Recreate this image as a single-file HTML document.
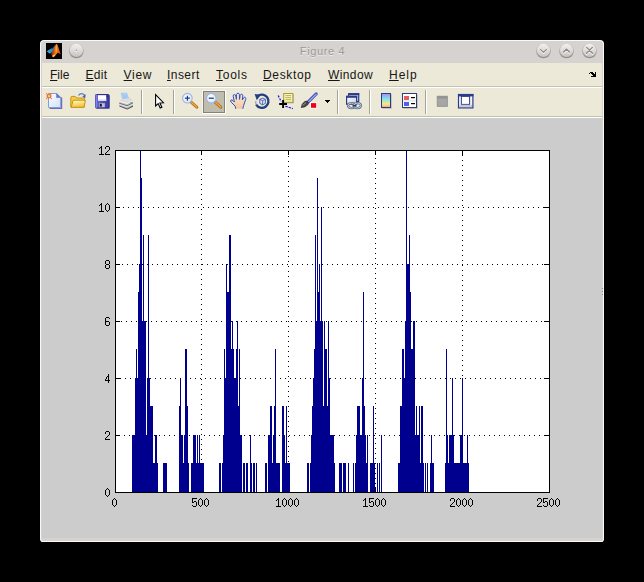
<!DOCTYPE html>
<html><head><meta charset="utf-8">
<style>
html,body{margin:0;padding:0;background:#000;}
body{width:644px;height:582px;position:relative;overflow:hidden;font-family:"Liberation Sans",sans-serif;}
#win{position:absolute;left:40px;top:40px;width:564px;height:502px;background:#d6d2d0;border-radius:4px 4px 3px 3px;overflow:hidden;}
#win:before{content:"";position:absolute;left:0;top:0;right:0;bottom:0;border:1px solid #f9f8f7;border-radius:4px 4px 3px 3px;pointer-events:none;z-index:5;}
#title{position:absolute;left:0;top:0;width:564px;height:23px;}
#title .t{position:absolute;left:0.5px;width:564px;top:5px;text-align:center;font-size:11px;color:#9e9696;text-shadow:0 1px 0 #efedeb;letter-spacing:0.62px;}
#menu{position:absolute;left:2px;top:23px;width:560px;height:23px;background:#ece9d8;}
#menu span{position:absolute;top:5px;font-size:12px;color:#161616;white-space:nowrap;}
#menu span u{text-decoration:underline;}
#sep1{position:absolute;left:2px;top:46px;width:560px;height:1px;background:#c6c3b1;}
#sep2{position:absolute;left:2px;top:47px;width:560px;height:1px;background:#fff;}
#tool{position:absolute;left:2px;top:48px;width:560px;height:28px;background:#ece9d8;}
#sep3{position:absolute;left:2px;top:76px;width:560px;height:1px;background:#c3c1ae;}
#sep4{position:absolute;left:2px;top:77px;width:560px;height:1px;background:#ffffff;}
#fig{position:absolute;left:2px;top:78px;width:560px;height:420px;background:#cccccc;}
#bot{position:absolute;left:1px;top:501px;width:562px;height:1px;background:#eceae8;}
</style></head><body>
<div id="win">
 <div id="title"><div class="t">Figure 4</div></div>
 <div id="menu">
  <span style="left:8px"><u>F</u>ile</span>
  <span style="left:43.5px;letter-spacing:0.3px"><u>E</u>dit</span>
  <span style="left:81.6px;letter-spacing:0.7px"><u>V</u>iew</span>
  <span style="left:125px;letter-spacing:0.45px"><u>I</u>nsert</span>
  <span style="left:174px;letter-spacing:0.75px"><u>T</u>ools</span>
  <span style="left:221px;letter-spacing:0.65px"><u>D</u>esktop</span>
  <span style="left:286px;letter-spacing:0.4px"><u>W</u>indow</span>
  <span style="left:347px;letter-spacing:1px"><u>H</u>elp</span>
 </div>
 <div id="sep1"></div><div id="sep2"></div>
 <div id="tool"></div>
 <div id="sep3"></div><div id="sep4"></div>
 <div id="fig"></div><div id="bot"></div>
</div>
<svg width="644" height="582" style="position:absolute;left:0;top:0">
<defs>
 <linearGradient id="gpage" x1="0" y1="0" x2="1" y2="1"><stop offset="0" stop-color="#ffffff"/><stop offset="1" stop-color="#cfe0fa"/></linearGradient>
 <linearGradient id="gfold" x1="0" y1="0" x2="0.3" y2="1"><stop offset="0" stop-color="#fffbdc"/><stop offset="0.6" stop-color="#f8dc70"/><stop offset="1" stop-color="#eec040"/></linearGradient>
 <linearGradient id="gsave" x1="0" y1="0" x2="1" y2="0"><stop offset="0" stop-color="#6a6ae0"/><stop offset="1" stop-color="#3a3a9c"/></linearGradient>
 <linearGradient id="gcbar" x1="0" y1="0" x2="0" y2="1"><stop offset="0" stop-color="#a48cf4"/><stop offset="0.4" stop-color="#84e4ec"/><stop offset="0.75" stop-color="#f8ec84"/><stop offset="1" stop-color="#f8a090"/></linearGradient>
 <radialGradient id="glens" cx="0.4" cy="0.4" r="0.7"><stop offset="0" stop-color="#ffffff"/><stop offset="1" stop-color="#c4ecf4"/></radialGradient>
 <linearGradient id="gwin" x1="0" y1="0" x2="1" y2="1"><stop offset="0" stop-color="#ffffff"/><stop offset="1" stop-color="#c8ccd8"/></linearGradient>
 <linearGradient id="ghand" x1="0" y1="0" x2="0" y2="1"><stop offset="0" stop-color="#fde8d4"/><stop offset="1" stop-color="#f4c8a0"/></linearGradient>
 <linearGradient id="gbtn" x1="0" y1="0" x2="0" y2="1"><stop offset="0" stop-color="#f0efee"/><stop offset="1" stop-color="#c9c5c2"/></linearGradient>
</defs>
<!-- separators -->
<g shape-rendering="crispEdges">
 <g fill="#a5a397"><rect x="141" y="90" width="1" height="24"/><rect x="173" y="90" width="1" height="24"/><rect x="337" y="90" width="1" height="24"/><rect x="369" y="90" width="1" height="24"/><rect x="425" y="90" width="1" height="24"/></g>
 <g fill="#ffffff"><rect x="142" y="90" width="1" height="24"/><rect x="174" y="90" width="1" height="24"/><rect x="338" y="90" width="1" height="24"/><rect x="370" y="90" width="1" height="24"/><rect x="426" y="90" width="1" height="24"/></g>
 <!-- pressed button -->
 <rect x="202" y="90" width="24" height="24" fill="#ffffff"/><rect x="202" y="90" width="23" height="1" fill="#f6f5ee"/><rect x="202" y="90" width="1" height="23" fill="#f6f5ee"/>
 <rect x="203" y="91" width="22" height="22" fill="#848279"/>
 <rect x="204" y="92" width="20" height="20" fill="#bfbdae"/>
</g>
<!-- NEW -->
<g>
 <path d="M61.6 97.6 V108.5 H49.6" fill="none" stroke="#6c6cac" stroke-width="1.2"/>
 <path d="M48.5 93.5 H56.6 L60.6 97.5 V107.5 H48.5 Z" fill="url(#gpage)" stroke="#7e9ee4" stroke-width="1"/>
 <path d="M56.6 93.5 L60.6 97.5 H56.6 Z" fill="#7078c0" stroke="#5c68b0" stroke-width="0.6"/>
 <g fill="#e8683c"><circle cx="46.6" cy="93.6" r="0.65"/><circle cx="51.4" cy="93.6" r="0.65"/><circle cx="46.6" cy="98.6" r="0.65"/><circle cx="51.4" cy="98.6" r="0.65"/></g>
 <circle cx="49" cy="96.1" r="2.5" fill="#ea7046"/><circle cx="49" cy="96.1" r="1.2" fill="#e8dc58"/>
</g>
<!-- OPEN -->
<g>
 <path d="M78.5 95.5 C80 92.8 84 92.8 85 96.3" fill="none" stroke="#5a82c0" stroke-width="1.3"/>
 <path d="M85.6 94.2 L85.2 98.4 L82.4 96.6 Z" fill="#3e68b0"/>
 <path d="M70.8 107 V97.6 Q70.8 96.4 72 96.4 H75.4 L76.8 98 H83.4 Q84.4 98 84.4 99 V107 Z" fill="#f2cc58" stroke="#c8960c" stroke-width="1"/>
 <path d="M71.2 107.4 L73.2 100.2 H85.4 L84 107.4 Z" fill="url(#gfold)" stroke="#c8960c" stroke-width="1" stroke-linejoin="round"/>
</g>
<!-- SAVE -->
<g>
 <rect x="96.3" y="95.3" width="13.5" height="13.5" fill="#26267a" opacity="0.55"/>
 <rect x="95.5" y="94.5" width="13.5" height="13.5" rx="0.8" fill="url(#gsave)" stroke="#30308c" stroke-width="1"/>
 <rect x="95.5" y="94.5" width="1.2" height="13.5" fill="#9090ec"/>
 <rect x="98" y="95.2" width="8.2" height="5.8" fill="#ffffff"/>
 <rect x="98" y="99.4" width="8.2" height="1.6" fill="#d8dcf0"/>
 <rect x="99.2" y="103.2" width="5.6" height="4" fill="#c0c0c8"/>
 <rect x="99.8" y="103.8" width="2" height="2.8" fill="#181830"/>
 <rect x="106.6" y="95.6" width="1.2" height="1.2" fill="#20206c"/>
</g>
<!-- PRINT -->
<g>
 <path d="M121.2 93.2 L126.8 93.2 L128.6 98.6 L122.8 99.8 Z" fill="#b4d8fc" stroke="#90b8e8" stroke-width="0.6"/>
 <path d="M122.2 94.6 L126.4 94.4 L127.6 98 L123.2 98.8Z" fill="#9cc8f4"/>
 <path d="M119.4 101.4 L122.6 99 L129.4 98.2 L133 100.8 L133 105.6 L127.2 108.6 L119.4 105.6 Z" fill="#bdbdbd"/>
 <path d="M119.4 101.4 L122.6 99 L129.4 98.2 L133 100.8 L127.2 103.6 Z" fill="#dcdcdc"/>
 <path d="M119.4 101.4 L127.2 103.6 L133 100.8" fill="none" stroke="#fafafa" stroke-width="0.9"/>
 <path d="M119.4 103.4 L127.2 105.8 L133 103" fill="none" stroke="#6c6c6c" stroke-width="1"/>
 <path d="M119.6 104.4 L127.2 106.8 L133 104" fill="none" stroke="#f0f0f0" stroke-width="0.8"/>
 <path d="M119.4 105.6 L127.2 108.6 L133 105.6 L133 106.8 L127.2 109.6 L119.4 106.6Z" fill="#484848"/>
 <rect x="130.4" y="102" width="1.2" height="1" fill="#38b838"/>
</g>
<!-- ARROW -->
<path d="M155.6 94.6 V106 L158.2 103.6 L160.2 108 L161.9 107.2 L159.9 102.9 L163.4 102.7 Z" fill="#ffffff" stroke="#000000" stroke-width="1.1" stroke-linejoin="miter"/>
<!-- ZOOM IN -->
<g>
 <path d="M191.4 102.4 L196.8 107.2" stroke="#a86c28" stroke-width="3" stroke-linecap="round"/>
 <path d="M191.6 102.4 L196.6 106.9" stroke="#f0a030" stroke-width="1.7" stroke-linecap="round"/>
 <circle cx="187.4" cy="98.2" r="4.8" fill="url(#glens)" stroke="#a8aee6" stroke-width="1.1"/>
 <path d="M184.9 98.2h5M187.4 95.7v5" stroke="#283c84" stroke-width="1.2"/>
</g>
<!-- ZOOM OUT -->
<g>
 <path d="M215.4 102.4 L220.8 107.2" stroke="#a86c28" stroke-width="3" stroke-linecap="round"/>
 <path d="M215.6 102.4 L220.6 106.9" stroke="#f0a030" stroke-width="1.7" stroke-linecap="round"/>
 <circle cx="211.3" cy="98.2" r="4.8" fill="url(#glens)" stroke="#a8aee6" stroke-width="1.1"/>
 <path d="M208.8 98.2h5" stroke="#283c84" stroke-width="1.3"/>
</g>
<!-- HAND -->
<g>
 <path d="M235.7 108.8 L235.2 106.2 L231.2 102.2 Q230 100.6 231 100 Q232 99.6 233.2 100.8 L234.4 102 L233.2 96.2 Q233 94.6 234.3 94.5 Q235.6 94.5 235.8 96 L236.4 99.4 L236.5 94.6 Q236.7 93.2 238 93.2 Q239.3 93.2 239.4 94.6 L239.5 99.4 L240.2 95.4 Q240.6 94 241.8 94.2 Q243 94.5 242.8 96 L242.3 100 L243.6 97.8 Q244.4 96.8 245.3 97.4 Q246.1 98.1 245.7 99.4 L243.6 105.6 L242.8 108.8 Z" fill="url(#ghand)"/>
 <path d="M235.7 108.8 L235.2 106.2 L231.2 102.2 Q230 100.6 231 100 Q232 99.6 233.2 100.8 L234.4 102 L233.2 96.2 Q233 94.6 234.3 94.5 Q235.6 94.5 235.8 96 L236.4 99.4 L236.5 94.6 Q236.7 93.2 238 93.2 Q239.3 93.2 239.4 94.6 L239.5 99.4 L240.2 95.4 Q240.6 94 241.8 94.2 Q243 94.5 242.8 96 L242.3 100 L243.6 97.8 Q244.4 96.8 245.3 97.4 Q246.1 98.1 245.7 99.4 L243.6 105.6 L242.8 108.8" fill="none" stroke="#2c54c8" stroke-width="1" stroke-linejoin="round"/>
</g>
<!-- ROTATE -->
<g>
 <path d="M257.6 96.2 A6.6 6.6 0 1 1 256.2 104.6" fill="none" stroke="#243c84" stroke-width="2.3"/>
 <path d="M256.2 104.6 A6.6 6.6 0 0 1 255.8 101" fill="none" stroke="#2c4890" stroke-width="1.6" opacity="0.35"/>
 <path d="M254.6 94 L260.8 94.8 L256.8 100.2 Z" fill="#243c84"/>
 <path d="M259.8 99.4 L262.6 98.2 L265.4 99.4 V103.4 L262.6 104.8 L259.8 103.4Z" fill="#dce6fa" stroke="#3c58a8" stroke-width="0.9"/>
 <path d="M259.8 99.4 L262.6 100.6 L265.4 99.4 M262.6 100.6 V104.8" fill="none" stroke="#3c58a8" stroke-width="0.8"/>
</g>
<!-- DATA CURSOR -->
<g>
 <rect x="284.4" y="94.2" width="9.4" height="9.2" fill="#8c8c8c" opacity="0.5"/>
 <rect x="283.7" y="93.5" width="9.2" height="8.8" fill="#f8f6b4" stroke="#a89a34" stroke-width="1"/>
 <path d="M285.4 95.6h5.8M285.4 97.6h5.8M285.4 99.6h5.8" stroke="#b0a860" stroke-width="0.9"/>
 <path d="M278.2 95.6 L281.2 101.6" stroke="#1010ff" stroke-width="1.2" stroke-dasharray="2 1.2"/>
 <path d="M285.4 106.2 L292.8 108.6" stroke="#1010ff" stroke-width="1.2" stroke-dasharray="2.4 1"/>
 <path d="M279.2 104h7.8M283.1 100.1v7.8" stroke="#000" stroke-width="1.9"/>
</g>
<!-- BRUSH -->
<g>
 <path d="M308.2 101.8 L316.2 93.9" stroke="#4858c0" stroke-width="3.2" stroke-linecap="round"/>
 <path d="M308.8 101.6 L316 94.4" stroke="#e8ecff" stroke-width="0.9" stroke-linecap="round"/>
 <path d="M301.2 107.6 Q301.4 104 304.6 101.6 Q306.4 100.4 307.8 101.8 Q309.2 103.4 307.8 104.8 Q305.4 107.4 301.2 107.6 Z" fill="#484848" stroke="#202020" stroke-width="0.6"/>
 <path d="M303 105.6 Q304 103.6 306 102.6" stroke="#a0a0a0" stroke-width="0.9" fill="none"/>
 <rect x="310.2" y="102.2" width="6.8" height="6.4" fill="#ffffff"/>
 <rect x="311" y="103.1" width="5.2" height="4.7" fill="#f40014"/>
</g>
<path d="M325 100h5v1h-1v1h-1v1h-1v-1h-1v-1h-1z" fill="#000" shape-rendering="crispEdges"/>
<!-- LINK -->
<g>
 <rect x="348.7" y="93.7" width="10" height="7.8" fill="url(#gwin)" stroke="#2c3c8c" stroke-width="1.2"/>
 <rect x="348.2" y="93.2" width="11" height="2" fill="#2c3c8c"/>
 <rect x="346.6" y="96.4" width="10" height="7.8" fill="url(#gwin)" stroke="#2c3c8c" stroke-width="1.2"/>
 <rect x="346" y="95.8" width="11.2" height="2" fill="#2c3c8c"/>
 <ellipse cx="351.6" cy="105.6" rx="3.6" ry="2.5" fill="none" stroke="#5c6c8c" stroke-width="2.2"/>
 <ellipse cx="351.6" cy="105.6" rx="3.6" ry="2.5" fill="none" stroke="#b8c8e0" stroke-width="1"/>
 <ellipse cx="357.4" cy="105.6" rx="3.6" ry="2.5" fill="none" stroke="#5c6c8c" stroke-width="2.2"/>
 <ellipse cx="357.4" cy="105.6" rx="3.6" ry="2.5" fill="none" stroke="#b8c8e0" stroke-width="1"/>
 <path d="M352.6 105.8h3.8" stroke="#283048" stroke-width="1.3"/>
</g>
<!-- COLORBAR -->
<g>
 <rect x="382.3" y="94.3" width="9.4" height="14.4" fill="#8c8c84" opacity="0.55"/>
 <rect x="381.5" y="93.5" width="9" height="14" fill="url(#gcbar)" stroke="#2c3c80" stroke-width="1"/>
</g>
<!-- LEGEND -->
<g>
 <rect x="403.3" y="94.3" width="14.4" height="14.4" fill="#8c8c84" opacity="0.55"/>
 <rect x="402.5" y="93.5" width="14" height="14" fill="#ffffff" stroke="#2c3c80" stroke-width="1"/>
 <rect x="403" y="100" width="13" height="1.6" fill="#e4e8f4"/>
 <rect x="404" y="96" width="5" height="4" fill="#e85c5c"/>
 <rect x="404" y="102" width="5" height="4" fill="#5c5ce4"/>
 <rect x="411" y="97" width="4" height="1.2" fill="#000"/>
 <rect x="411" y="103" width="4" height="1.2" fill="#000"/>
</g>
<!-- GRAY SQUARE -->
<g>
 <rect x="437.6" y="96.6" width="10.4" height="10.4" fill="#8a8a84" opacity="0.45"/>
 <rect x="437.2" y="96.2" width="10" height="10" fill="#a6a6a6" stroke="#909090" stroke-width="0.8"/>
 <rect x="437.2" y="96.2" width="10" height="2.2" fill="#929292"/>
</g>
<!-- DOCK -->
<g>
 <rect x="458.5" y="94.5" width="14.4" height="13.4" fill="#f4f4f8" stroke="#2c3c8c" stroke-width="1.2"/>
 <rect x="458" y="94" width="15.4" height="2.4" fill="#2c3c8c"/>
 <rect x="461.4" y="96.4" width="8.2" height="8" fill="#ffffff" stroke="#2c3c8c" stroke-width="1"/>
 <rect x="459.4" y="104.8" width="12.6" height="2" fill="#c4c4c8"/>
 <path d="M460.6 97v7M470.6 97v7" stroke="#d8d8e0" stroke-width="1" stroke-dasharray="1 1"/>
</g>
</svg>

<svg width="644" height="582" style="position:absolute;left:0;top:0">
<defs>
 <linearGradient id="gb1" x1="0" y1="0" x2="0" y2="1"><stop offset="0" stop-color="#f2f1f0"/><stop offset="0.55" stop-color="#dcd9d7"/><stop offset="1" stop-color="#c6c2bf"/></linearGradient>
 <linearGradient id="gb2" x1="0" y1="0" x2="0" y2="1"><stop offset="0" stop-color="#c2beba"/><stop offset="1" stop-color="#8e8a86"/></linearGradient>
 <linearGradient id="gml" x1="0" y1="0" x2="1" y2="0"><stop offset="0" stop-color="#8c2410"/><stop offset="0.3" stop-color="#dc4c1c"/><stop offset="0.52" stop-color="#f49020"/><stop offset="0.7" stop-color="#e86820"/><stop offset="1" stop-color="#b03414"/></linearGradient>
 <linearGradient id="gmb" x1="0" y1="0" x2="1" y2="0"><stop offset="0" stop-color="#38b4e0"/><stop offset="1" stop-color="#2c6c98"/></linearGradient>
</defs>
<!-- matlab icon -->
<rect x="46" y="43" width="16" height="16" fill="#000" shape-rendering="crispEdges"/>
<g transform="translate(46,43)">
 <path d="M0.7 8.3 L5.2 5.4 L7 5.6 L9.3 1.8 L9.6 3.4 L7 8.4 L5.4 9.7 L3.7 10.7 Z" fill="url(#gmb)"/>
 <path d="M5.2 5.4 L7 5.6 L9.3 1.8 L8.4 2.8 L6.8 4.8Z" fill="#2a7ca0"/>
 <path d="M10.5 1.1 Q9.6 1.6 9.3 2.5 L8 5.9 L6.3 8.7 L5.05 10.9 L6.1 13.1 Q6.6 14.2 7.3 14.2 L9.3 12.4 L11.4 10 Q11.9 9.7 12.4 9.9 L14.8 11.6 L13.1 6.3 L11.75 2.5 Q11.2 1 10.5 1.1 Z" fill="url(#gml)"/>
 <path d="M6.1 13.1 Q6.6 14.2 7.3 14.2 L9.3 12.4 L8.4 11.2 Q7 12 6.1 13.1Z" fill="#fcd428"/>
 <path d="M10.5 1.2 L10.9 6.5 L10.2 9.4 L9.6 6 Z" fill="#fcc428" opacity="0.8"/>
</g>
<!-- title buttons -->
<defs>
 <g id="tb">
  <circle cx="0" cy="0.6" r="7.3" fill="url(#gb2)"/>
  <circle cx="0" cy="0" r="6.6" fill="url(#gb1)"/>
 </g>
</defs>
<use href="#tb" x="76.4" y="50.4"/>
<use href="#tb" x="543.5" y="50.4"/>
<use href="#tb" x="566.5" y="50.4"/>
<use href="#tb" x="589.5" y="50.4"/>
<circle cx="76.4" cy="51.2" r="0.7" fill="#ffffff"/><circle cx="76.4" cy="50.2" r="0.6" fill="#8c8884"/>
<g fill="none" stroke-linecap="round" stroke-linejoin="round">
 <path d="M540.6 50.6 L543.5 53.4 L546.4 50.6" stroke="#f8f8f8" stroke-width="1.3"/>
 <path d="M540.6 49.6 L543.5 52.4 L546.4 49.6" stroke="#8c8886" stroke-width="1.3"/>
 <path d="M563.6 53 L566.5 50.2 L569.4 53" stroke="#f8f8f8" stroke-width="1.3"/>
 <path d="M563.6 52 L566.5 49.2 L569.4 52" stroke="#8c8886" stroke-width="1.3"/>
 <path d="M586.6 48.4 L592.4 54.2 M592.4 48.4 L586.6 54.2" stroke="#f8f8f8" stroke-width="1.3"/>
 <path d="M586.6 47.4 L592.4 53.2 M592.4 47.4 L586.6 53.2" stroke="#8c8886" stroke-width="1.3"/>
</g>
<g fill="#8a8482" shape-rendering="crispEdges"><rect x="602" y="288" width="1" height="1"/><rect x="602" y="291" width="1" height="1"/><rect x="602" y="294" width="1" height="1"/></g>
<!-- dock arrow -->
<path shape-rendering="crispEdges" fill="#000" d="M590 72h3v1h-3zM595 72h1v5h-1zM589 73h1v1h-1zM591 73h3v1h-3zM592 74h3v1h-3zM593 75h2v1h-2zM591 76h4v1h-4z"/>
</svg>

<svg width="644" height="582" style="position:absolute;left:0;top:0" shape-rendering="crispEdges">
 <rect x="115" y="150" width="435" height="343" fill="#fff"/>
 <g fill="#000"><path d="M119 435h1v1h-1zM124 435h1v1h-1zM129 435h1v1h-1zM134 435h1v1h-1zM139 435h1v1h-1zM144 435h1v1h-1zM149 435h1v1h-1zM154 435h1v1h-1zM159 435h1v1h-1zM164 435h1v1h-1zM169 435h1v1h-1zM174 435h1v1h-1zM179 435h1v1h-1zM184 435h1v1h-1zM189 435h1v1h-1zM194 435h1v1h-1zM199 435h1v1h-1zM204 435h1v1h-1zM209 435h1v1h-1zM214 435h1v1h-1zM219 435h1v1h-1zM224 435h1v1h-1zM229 435h1v1h-1zM234 435h1v1h-1zM239 435h1v1h-1zM244 435h1v1h-1zM249 435h1v1h-1zM254 435h1v1h-1zM259 435h1v1h-1zM264 435h1v1h-1zM269 435h1v1h-1zM274 435h1v1h-1zM279 435h1v1h-1zM284 435h1v1h-1zM289 435h1v1h-1zM294 435h1v1h-1zM299 435h1v1h-1zM304 435h1v1h-1zM309 435h1v1h-1zM314 435h1v1h-1zM319 435h1v1h-1zM324 435h1v1h-1zM329 435h1v1h-1zM334 435h1v1h-1zM339 435h1v1h-1zM344 435h1v1h-1zM349 435h1v1h-1zM354 435h1v1h-1zM359 435h1v1h-1zM364 435h1v1h-1zM369 435h1v1h-1zM374 435h1v1h-1zM379 435h1v1h-1zM384 435h1v1h-1zM389 435h1v1h-1zM394 435h1v1h-1zM399 435h1v1h-1zM404 435h1v1h-1zM409 435h1v1h-1zM414 435h1v1h-1zM419 435h1v1h-1zM424 435h1v1h-1zM429 435h1v1h-1zM434 435h1v1h-1zM439 435h1v1h-1zM444 435h1v1h-1zM449 435h1v1h-1zM454 435h1v1h-1zM459 435h1v1h-1zM464 435h1v1h-1zM469 435h1v1h-1zM474 435h1v1h-1zM479 435h1v1h-1zM484 435h1v1h-1zM489 435h1v1h-1zM494 435h1v1h-1zM499 435h1v1h-1zM504 435h1v1h-1zM509 435h1v1h-1zM514 435h1v1h-1zM519 435h1v1h-1zM524 435h1v1h-1zM529 435h1v1h-1zM534 435h1v1h-1zM539 435h1v1h-1zM544 435h1v1h-1z"/><path d="M120 378h1v1h-1zM125 378h1v1h-1zM130 378h1v1h-1zM135 378h1v1h-1zM140 378h1v1h-1zM145 378h1v1h-1zM150 378h1v1h-1zM155 378h1v1h-1zM160 378h1v1h-1zM165 378h1v1h-1zM170 378h1v1h-1zM175 378h1v1h-1zM180 378h1v1h-1zM185 378h1v1h-1zM190 378h1v1h-1zM195 378h1v1h-1zM200 378h1v1h-1zM205 378h1v1h-1zM210 378h1v1h-1zM215 378h1v1h-1zM220 378h1v1h-1zM225 378h1v1h-1zM230 378h1v1h-1zM235 378h1v1h-1zM240 378h1v1h-1zM245 378h1v1h-1zM250 378h1v1h-1zM255 378h1v1h-1zM260 378h1v1h-1zM265 378h1v1h-1zM270 378h1v1h-1zM275 378h1v1h-1zM280 378h1v1h-1zM285 378h1v1h-1zM290 378h1v1h-1zM295 378h1v1h-1zM300 378h1v1h-1zM305 378h1v1h-1zM310 378h1v1h-1zM315 378h1v1h-1zM320 378h1v1h-1zM325 378h1v1h-1zM330 378h1v1h-1zM335 378h1v1h-1zM340 378h1v1h-1zM345 378h1v1h-1zM350 378h1v1h-1zM355 378h1v1h-1zM360 378h1v1h-1zM365 378h1v1h-1zM370 378h1v1h-1zM375 378h1v1h-1zM380 378h1v1h-1zM385 378h1v1h-1zM390 378h1v1h-1zM395 378h1v1h-1zM400 378h1v1h-1zM405 378h1v1h-1zM410 378h1v1h-1zM415 378h1v1h-1zM420 378h1v1h-1zM425 378h1v1h-1zM430 378h1v1h-1zM435 378h1v1h-1zM440 378h1v1h-1zM445 378h1v1h-1zM450 378h1v1h-1zM455 378h1v1h-1zM460 378h1v1h-1zM465 378h1v1h-1zM470 378h1v1h-1zM475 378h1v1h-1zM480 378h1v1h-1zM485 378h1v1h-1zM490 378h1v1h-1zM495 378h1v1h-1zM500 378h1v1h-1zM505 378h1v1h-1zM510 378h1v1h-1zM515 378h1v1h-1zM520 378h1v1h-1zM525 378h1v1h-1zM530 378h1v1h-1zM535 378h1v1h-1zM540 378h1v1h-1zM545 378h1v1h-1z"/><path d="M116 321h1v1h-1zM121 321h1v1h-1zM126 321h1v1h-1zM131 321h1v1h-1zM136 321h1v1h-1zM141 321h1v1h-1zM146 321h1v1h-1zM151 321h1v1h-1zM156 321h1v1h-1zM161 321h1v1h-1zM166 321h1v1h-1zM171 321h1v1h-1zM176 321h1v1h-1zM181 321h1v1h-1zM186 321h1v1h-1zM191 321h1v1h-1zM196 321h1v1h-1zM201 321h1v1h-1zM206 321h1v1h-1zM211 321h1v1h-1zM216 321h1v1h-1zM221 321h1v1h-1zM226 321h1v1h-1zM231 321h1v1h-1zM236 321h1v1h-1zM241 321h1v1h-1zM246 321h1v1h-1zM251 321h1v1h-1zM256 321h1v1h-1zM261 321h1v1h-1zM266 321h1v1h-1zM271 321h1v1h-1zM276 321h1v1h-1zM281 321h1v1h-1zM286 321h1v1h-1zM291 321h1v1h-1zM296 321h1v1h-1zM301 321h1v1h-1zM306 321h1v1h-1zM311 321h1v1h-1zM316 321h1v1h-1zM321 321h1v1h-1zM326 321h1v1h-1zM331 321h1v1h-1zM336 321h1v1h-1zM341 321h1v1h-1zM346 321h1v1h-1zM351 321h1v1h-1zM356 321h1v1h-1zM361 321h1v1h-1zM366 321h1v1h-1zM371 321h1v1h-1zM376 321h1v1h-1zM381 321h1v1h-1zM386 321h1v1h-1zM391 321h1v1h-1zM396 321h1v1h-1zM401 321h1v1h-1zM406 321h1v1h-1zM411 321h1v1h-1zM416 321h1v1h-1zM421 321h1v1h-1zM426 321h1v1h-1zM431 321h1v1h-1zM436 321h1v1h-1zM441 321h1v1h-1zM446 321h1v1h-1zM451 321h1v1h-1zM456 321h1v1h-1zM461 321h1v1h-1zM466 321h1v1h-1zM471 321h1v1h-1zM476 321h1v1h-1zM481 321h1v1h-1zM486 321h1v1h-1zM491 321h1v1h-1zM496 321h1v1h-1zM501 321h1v1h-1zM506 321h1v1h-1zM511 321h1v1h-1zM516 321h1v1h-1zM521 321h1v1h-1zM526 321h1v1h-1zM531 321h1v1h-1zM536 321h1v1h-1zM541 321h1v1h-1zM546 321h1v1h-1z"/><path d="M117 264h1v1h-1zM122 264h1v1h-1zM127 264h1v1h-1zM132 264h1v1h-1zM137 264h1v1h-1zM142 264h1v1h-1zM147 264h1v1h-1zM152 264h1v1h-1zM157 264h1v1h-1zM162 264h1v1h-1zM167 264h1v1h-1zM172 264h1v1h-1zM177 264h1v1h-1zM182 264h1v1h-1zM187 264h1v1h-1zM192 264h1v1h-1zM197 264h1v1h-1zM202 264h1v1h-1zM207 264h1v1h-1zM212 264h1v1h-1zM217 264h1v1h-1zM222 264h1v1h-1zM227 264h1v1h-1zM232 264h1v1h-1zM237 264h1v1h-1zM242 264h1v1h-1zM247 264h1v1h-1zM252 264h1v1h-1zM257 264h1v1h-1zM262 264h1v1h-1zM267 264h1v1h-1zM272 264h1v1h-1zM277 264h1v1h-1zM282 264h1v1h-1zM287 264h1v1h-1zM292 264h1v1h-1zM297 264h1v1h-1zM302 264h1v1h-1zM307 264h1v1h-1zM312 264h1v1h-1zM317 264h1v1h-1zM322 264h1v1h-1zM327 264h1v1h-1zM332 264h1v1h-1zM337 264h1v1h-1zM342 264h1v1h-1zM347 264h1v1h-1zM352 264h1v1h-1zM357 264h1v1h-1zM362 264h1v1h-1zM367 264h1v1h-1zM372 264h1v1h-1zM377 264h1v1h-1zM382 264h1v1h-1zM387 264h1v1h-1zM392 264h1v1h-1zM397 264h1v1h-1zM402 264h1v1h-1zM407 264h1v1h-1zM412 264h1v1h-1zM417 264h1v1h-1zM422 264h1v1h-1zM427 264h1v1h-1zM432 264h1v1h-1zM437 264h1v1h-1zM442 264h1v1h-1zM447 264h1v1h-1zM452 264h1v1h-1zM457 264h1v1h-1zM462 264h1v1h-1zM467 264h1v1h-1zM472 264h1v1h-1zM477 264h1v1h-1zM482 264h1v1h-1zM487 264h1v1h-1zM492 264h1v1h-1zM497 264h1v1h-1zM502 264h1v1h-1zM507 264h1v1h-1zM512 264h1v1h-1zM517 264h1v1h-1zM522 264h1v1h-1zM527 264h1v1h-1zM532 264h1v1h-1zM537 264h1v1h-1zM542 264h1v1h-1zM547 264h1v1h-1z"/><path d="M118 207h1v1h-1zM123 207h1v1h-1zM128 207h1v1h-1zM133 207h1v1h-1zM138 207h1v1h-1zM143 207h1v1h-1zM148 207h1v1h-1zM153 207h1v1h-1zM158 207h1v1h-1zM163 207h1v1h-1zM168 207h1v1h-1zM173 207h1v1h-1zM178 207h1v1h-1zM183 207h1v1h-1zM188 207h1v1h-1zM193 207h1v1h-1zM198 207h1v1h-1zM203 207h1v1h-1zM208 207h1v1h-1zM213 207h1v1h-1zM218 207h1v1h-1zM223 207h1v1h-1zM228 207h1v1h-1zM233 207h1v1h-1zM238 207h1v1h-1zM243 207h1v1h-1zM248 207h1v1h-1zM253 207h1v1h-1zM258 207h1v1h-1zM263 207h1v1h-1zM268 207h1v1h-1zM273 207h1v1h-1zM278 207h1v1h-1zM283 207h1v1h-1zM288 207h1v1h-1zM293 207h1v1h-1zM298 207h1v1h-1zM303 207h1v1h-1zM308 207h1v1h-1zM313 207h1v1h-1zM318 207h1v1h-1zM323 207h1v1h-1zM328 207h1v1h-1zM333 207h1v1h-1zM338 207h1v1h-1zM343 207h1v1h-1zM348 207h1v1h-1zM353 207h1v1h-1zM358 207h1v1h-1zM363 207h1v1h-1zM368 207h1v1h-1zM373 207h1v1h-1zM378 207h1v1h-1zM383 207h1v1h-1zM388 207h1v1h-1zM393 207h1v1h-1zM398 207h1v1h-1zM403 207h1v1h-1zM408 207h1v1h-1zM413 207h1v1h-1zM418 207h1v1h-1zM423 207h1v1h-1zM428 207h1v1h-1zM433 207h1v1h-1zM438 207h1v1h-1zM443 207h1v1h-1zM448 207h1v1h-1zM453 207h1v1h-1zM458 207h1v1h-1zM463 207h1v1h-1zM468 207h1v1h-1zM473 207h1v1h-1zM478 207h1v1h-1zM483 207h1v1h-1zM488 207h1v1h-1zM493 207h1v1h-1zM498 207h1v1h-1zM503 207h1v1h-1zM508 207h1v1h-1zM513 207h1v1h-1zM518 207h1v1h-1zM523 207h1v1h-1zM528 207h1v1h-1zM533 207h1v1h-1zM538 207h1v1h-1zM543 207h1v1h-1zM548 207h1v1h-1z"/><path d="M201 154h1v1h-1zM201 159h1v1h-1zM201 164h1v1h-1zM201 169h1v1h-1zM201 174h1v1h-1zM201 179h1v1h-1zM201 184h1v1h-1zM201 189h1v1h-1zM201 194h1v1h-1zM201 199h1v1h-1zM201 204h1v1h-1zM201 209h1v1h-1zM201 214h1v1h-1zM201 219h1v1h-1zM201 224h1v1h-1zM201 229h1v1h-1zM201 234h1v1h-1zM201 239h1v1h-1zM201 244h1v1h-1zM201 249h1v1h-1zM201 254h1v1h-1zM201 259h1v1h-1zM201 264h1v1h-1zM201 269h1v1h-1zM201 274h1v1h-1zM201 279h1v1h-1zM201 284h1v1h-1zM201 289h1v1h-1zM201 294h1v1h-1zM201 299h1v1h-1zM201 304h1v1h-1zM201 309h1v1h-1zM201 314h1v1h-1zM201 319h1v1h-1zM201 324h1v1h-1zM201 329h1v1h-1zM201 334h1v1h-1zM201 339h1v1h-1zM201 344h1v1h-1zM201 349h1v1h-1zM201 354h1v1h-1zM201 359h1v1h-1zM201 364h1v1h-1zM201 369h1v1h-1zM201 374h1v1h-1zM201 379h1v1h-1zM201 384h1v1h-1zM201 389h1v1h-1zM201 394h1v1h-1zM201 399h1v1h-1zM201 404h1v1h-1zM201 409h1v1h-1zM201 414h1v1h-1zM201 419h1v1h-1zM201 424h1v1h-1zM201 429h1v1h-1zM201 434h1v1h-1zM201 439h1v1h-1zM201 444h1v1h-1zM201 449h1v1h-1zM201 454h1v1h-1zM201 459h1v1h-1zM201 464h1v1h-1zM201 469h1v1h-1zM201 474h1v1h-1zM201 479h1v1h-1zM201 484h1v1h-1zM201 489h1v1h-1z"/><path d="M288 151h1v1h-1zM288 156h1v1h-1zM288 161h1v1h-1zM288 166h1v1h-1zM288 171h1v1h-1zM288 176h1v1h-1zM288 181h1v1h-1zM288 186h1v1h-1zM288 191h1v1h-1zM288 196h1v1h-1zM288 201h1v1h-1zM288 206h1v1h-1zM288 211h1v1h-1zM288 216h1v1h-1zM288 221h1v1h-1zM288 226h1v1h-1zM288 231h1v1h-1zM288 236h1v1h-1zM288 241h1v1h-1zM288 246h1v1h-1zM288 251h1v1h-1zM288 256h1v1h-1zM288 261h1v1h-1zM288 266h1v1h-1zM288 271h1v1h-1zM288 276h1v1h-1zM288 281h1v1h-1zM288 286h1v1h-1zM288 291h1v1h-1zM288 296h1v1h-1zM288 301h1v1h-1zM288 306h1v1h-1zM288 311h1v1h-1zM288 316h1v1h-1zM288 321h1v1h-1zM288 326h1v1h-1zM288 331h1v1h-1zM288 336h1v1h-1zM288 341h1v1h-1zM288 346h1v1h-1zM288 351h1v1h-1zM288 356h1v1h-1zM288 361h1v1h-1zM288 366h1v1h-1zM288 371h1v1h-1zM288 376h1v1h-1zM288 381h1v1h-1zM288 386h1v1h-1zM288 391h1v1h-1zM288 396h1v1h-1zM288 401h1v1h-1zM288 406h1v1h-1zM288 411h1v1h-1zM288 416h1v1h-1zM288 421h1v1h-1zM288 426h1v1h-1zM288 431h1v1h-1zM288 436h1v1h-1zM288 441h1v1h-1zM288 446h1v1h-1zM288 451h1v1h-1zM288 456h1v1h-1zM288 461h1v1h-1zM288 466h1v1h-1zM288 471h1v1h-1zM288 476h1v1h-1zM288 481h1v1h-1zM288 486h1v1h-1zM288 491h1v1h-1z"/><path d="M375 153h1v1h-1zM375 158h1v1h-1zM375 163h1v1h-1zM375 168h1v1h-1zM375 173h1v1h-1zM375 178h1v1h-1zM375 183h1v1h-1zM375 188h1v1h-1zM375 193h1v1h-1zM375 198h1v1h-1zM375 203h1v1h-1zM375 208h1v1h-1zM375 213h1v1h-1zM375 218h1v1h-1zM375 223h1v1h-1zM375 228h1v1h-1zM375 233h1v1h-1zM375 238h1v1h-1zM375 243h1v1h-1zM375 248h1v1h-1zM375 253h1v1h-1zM375 258h1v1h-1zM375 263h1v1h-1zM375 268h1v1h-1zM375 273h1v1h-1zM375 278h1v1h-1zM375 283h1v1h-1zM375 288h1v1h-1zM375 293h1v1h-1zM375 298h1v1h-1zM375 303h1v1h-1zM375 308h1v1h-1zM375 313h1v1h-1zM375 318h1v1h-1zM375 323h1v1h-1zM375 328h1v1h-1zM375 333h1v1h-1zM375 338h1v1h-1zM375 343h1v1h-1zM375 348h1v1h-1zM375 353h1v1h-1zM375 358h1v1h-1zM375 363h1v1h-1zM375 368h1v1h-1zM375 373h1v1h-1zM375 378h1v1h-1zM375 383h1v1h-1zM375 388h1v1h-1zM375 393h1v1h-1zM375 398h1v1h-1zM375 403h1v1h-1zM375 408h1v1h-1zM375 413h1v1h-1zM375 418h1v1h-1zM375 423h1v1h-1zM375 428h1v1h-1zM375 433h1v1h-1zM375 438h1v1h-1zM375 443h1v1h-1zM375 448h1v1h-1zM375 453h1v1h-1zM375 458h1v1h-1zM375 463h1v1h-1zM375 468h1v1h-1zM375 473h1v1h-1zM375 478h1v1h-1zM375 483h1v1h-1zM375 488h1v1h-1z"/><path d="M462 155h1v1h-1zM462 160h1v1h-1zM462 165h1v1h-1zM462 170h1v1h-1zM462 175h1v1h-1zM462 180h1v1h-1zM462 185h1v1h-1zM462 190h1v1h-1zM462 195h1v1h-1zM462 200h1v1h-1zM462 205h1v1h-1zM462 210h1v1h-1zM462 215h1v1h-1zM462 220h1v1h-1zM462 225h1v1h-1zM462 230h1v1h-1zM462 235h1v1h-1zM462 240h1v1h-1zM462 245h1v1h-1zM462 250h1v1h-1zM462 255h1v1h-1zM462 260h1v1h-1zM462 265h1v1h-1zM462 270h1v1h-1zM462 275h1v1h-1zM462 280h1v1h-1zM462 285h1v1h-1zM462 290h1v1h-1zM462 295h1v1h-1zM462 300h1v1h-1zM462 305h1v1h-1zM462 310h1v1h-1zM462 315h1v1h-1zM462 320h1v1h-1zM462 325h1v1h-1zM462 330h1v1h-1zM462 335h1v1h-1zM462 340h1v1h-1zM462 345h1v1h-1zM462 350h1v1h-1zM462 355h1v1h-1zM462 360h1v1h-1zM462 365h1v1h-1zM462 370h1v1h-1zM462 375h1v1h-1zM462 380h1v1h-1zM462 385h1v1h-1zM462 390h1v1h-1zM462 395h1v1h-1zM462 400h1v1h-1zM462 405h1v1h-1zM462 410h1v1h-1zM462 415h1v1h-1zM462 420h1v1h-1zM462 425h1v1h-1zM462 430h1v1h-1zM462 435h1v1h-1zM462 440h1v1h-1zM462 445h1v1h-1zM462 450h1v1h-1zM462 455h1v1h-1zM462 460h1v1h-1zM462 465h1v1h-1zM462 470h1v1h-1zM462 475h1v1h-1zM462 480h1v1h-1zM462 485h1v1h-1zM462 490h1v1h-1z"/></g>
 <g fill="#000"><rect x="116" y="435" width="4" height="1"/><rect x="544" y="435" width="5" height="1"/><rect x="116" y="378" width="4" height="1"/><rect x="544" y="378" width="5" height="1"/><rect x="116" y="321" width="4" height="1"/><rect x="544" y="321" width="5" height="1"/><rect x="116" y="264" width="4" height="1"/><rect x="544" y="264" width="5" height="1"/><rect x="116" y="207" width="4" height="1"/><rect x="544" y="207" width="5" height="1"/><rect x="201" y="487" width="1" height="5"/><rect x="201" y="151" width="1" height="4"/><rect x="288" y="487" width="1" height="5"/><rect x="288" y="151" width="1" height="4"/><rect x="375" y="487" width="1" height="5"/><rect x="375" y="151" width="1" height="4"/><rect x="462" y="487" width="1" height="5"/><rect x="462" y="151" width="1" height="4"/></g>
 <g fill="#00008f"><rect x="132" y="435" width="3" height="57"/><rect x="135" y="378" width="1" height="114"/><rect x="136" y="349" width="1" height="143"/><rect x="137" y="378" width="1" height="114"/><rect x="138" y="292" width="1" height="200"/><rect x="139" y="264" width="1" height="228"/><rect x="140" y="150" width="1" height="342"/><rect x="141" y="178" width="1" height="314"/><rect x="142" y="321" width="1" height="171"/><rect x="143" y="235" width="1" height="257"/><rect x="144" y="321" width="2" height="171"/><rect x="146" y="435" width="1" height="57"/><rect x="147" y="378" width="1" height="114"/><rect x="148" y="235" width="1" height="257"/><rect x="149" y="378" width="1" height="114"/><rect x="150" y="406" width="3" height="86"/><rect x="153" y="463" width="2" height="29"/><rect x="155" y="435" width="2" height="57"/><rect x="157" y="463" width="1" height="29"/><rect x="163" y="463" width="4" height="29"/><rect x="179" y="406" width="1" height="86"/><rect x="180" y="378" width="1" height="114"/><rect x="181" y="435" width="2" height="57"/><rect x="183" y="463" width="1" height="29"/><rect x="184" y="435" width="1" height="57"/><rect x="185" y="349" width="2" height="143"/><rect x="187" y="406" width="1" height="86"/><rect x="188" y="463" width="1" height="29"/><rect x="191" y="463" width="2" height="29"/><rect x="193" y="435" width="3" height="57"/><rect x="196" y="463" width="1" height="29"/><rect x="197" y="435" width="1" height="57"/><rect x="198" y="463" width="1" height="29"/><rect x="199" y="435" width="1" height="57"/><rect x="200" y="463" width="4" height="29"/><rect x="219" y="463" width="2" height="29"/><rect x="222" y="463" width="1" height="29"/><rect x="223" y="435" width="1" height="57"/><rect x="224" y="349" width="1" height="143"/><rect x="225" y="378" width="1" height="114"/><rect x="226" y="264" width="1" height="228"/><rect x="227" y="292" width="2" height="200"/><rect x="229" y="235" width="2" height="257"/><rect x="231" y="349" width="1" height="143"/><rect x="232" y="321" width="1" height="171"/><rect x="233" y="349" width="1" height="143"/><rect x="234" y="378" width="2" height="114"/><rect x="236" y="349" width="1" height="143"/><rect x="237" y="321" width="1" height="171"/><rect x="238" y="406" width="1" height="86"/><rect x="239" y="349" width="1" height="143"/><rect x="240" y="435" width="2" height="57"/><rect x="243" y="463" width="2" height="29"/><rect x="246" y="463" width="2" height="29"/><rect x="250" y="435" width="1" height="57"/><rect x="251" y="463" width="1" height="29"/><rect x="253" y="463" width="2" height="29"/><rect x="256" y="463" width="1" height="29"/><rect x="265" y="463" width="2" height="29"/><rect x="268" y="435" width="2" height="57"/><rect x="270" y="406" width="2" height="86"/><rect x="272" y="463" width="1" height="29"/><rect x="273" y="435" width="1" height="57"/><rect x="274" y="406" width="1" height="86"/><rect x="275" y="349" width="1" height="143"/><rect x="276" y="463" width="4" height="29"/><rect x="282" y="406" width="2" height="86"/><rect x="284" y="435" width="1" height="57"/><rect x="285" y="463" width="1" height="29"/><rect x="286" y="406" width="1" height="86"/><rect x="287" y="463" width="3" height="29"/><rect x="307" y="463" width="2" height="29"/><rect x="310" y="463" width="1" height="29"/><rect x="311" y="435" width="1" height="57"/><rect x="312" y="406" width="1" height="86"/><rect x="313" y="378" width="1" height="114"/><rect x="314" y="349" width="1" height="143"/><rect x="315" y="235" width="1" height="257"/><rect x="316" y="321" width="1" height="171"/><rect x="317" y="178" width="1" height="314"/><rect x="318" y="292" width="1" height="200"/><rect x="319" y="264" width="1" height="228"/><rect x="320" y="321" width="1" height="171"/><rect x="321" y="207" width="1" height="285"/><rect x="322" y="321" width="1" height="171"/><rect x="323" y="406" width="1" height="86"/><rect x="324" y="321" width="1" height="171"/><rect x="325" y="349" width="2" height="143"/><rect x="327" y="406" width="1" height="86"/><rect x="328" y="321" width="1" height="171"/><rect x="329" y="378" width="1" height="114"/><rect x="330" y="435" width="4" height="57"/><rect x="334" y="463" width="1" height="29"/><rect x="339" y="463" width="3" height="29"/><rect x="343" y="463" width="3" height="29"/><rect x="348" y="463" width="1" height="29"/><rect x="353" y="463" width="1" height="29"/><rect x="355" y="463" width="1" height="29"/><rect x="356" y="435" width="1" height="57"/><rect x="357" y="406" width="3" height="86"/><rect x="360" y="435" width="2" height="57"/><rect x="362" y="378" width="1" height="114"/><rect x="363" y="292" width="1" height="200"/><rect x="364" y="406" width="1" height="86"/><rect x="365" y="435" width="1" height="57"/><rect x="366" y="463" width="1" height="29"/><rect x="367" y="435" width="1" height="57"/><rect x="370" y="463" width="3" height="29"/><rect x="373" y="406" width="1" height="86"/><rect x="374" y="463" width="1" height="29"/><rect x="377" y="463" width="1" height="29"/><rect x="379" y="463" width="1" height="29"/><rect x="381" y="435" width="1" height="57"/><rect x="398" y="463" width="2" height="29"/><rect x="400" y="406" width="2" height="86"/><rect x="402" y="349" width="2" height="143"/><rect x="404" y="378" width="1" height="114"/><rect x="405" y="321" width="1" height="171"/><rect x="406" y="150" width="1" height="342"/><rect x="407" y="264" width="2" height="228"/><rect x="409" y="235" width="1" height="257"/><rect x="410" y="292" width="1" height="200"/><rect x="411" y="349" width="2" height="143"/><rect x="413" y="321" width="2" height="171"/><rect x="415" y="435" width="1" height="57"/><rect x="416" y="406" width="1" height="86"/><rect x="417" y="435" width="2" height="57"/><rect x="419" y="406" width="1" height="86"/><rect x="420" y="463" width="1" height="29"/><rect x="421" y="406" width="2" height="86"/><rect x="423" y="463" width="1" height="29"/><rect x="425" y="463" width="1" height="29"/><rect x="427" y="463" width="1" height="29"/><rect x="430" y="463" width="1" height="29"/><rect x="431" y="435" width="1" height="57"/><rect x="432" y="463" width="2" height="29"/><rect x="445" y="463" width="1" height="29"/><rect x="446" y="349" width="1" height="143"/><rect x="447" y="435" width="1" height="57"/><rect x="448" y="463" width="1" height="29"/><rect x="449" y="435" width="3" height="57"/><rect x="452" y="378" width="1" height="114"/><rect x="453" y="435" width="1" height="57"/><rect x="454" y="463" width="6" height="29"/><rect x="460" y="435" width="2" height="57"/><rect x="462" y="378" width="1" height="114"/><rect x="463" y="463" width="4" height="29"/><rect x="467" y="435" width="1" height="57"/><rect x="468" y="463" width="1" height="29"/></g>
 <rect x="115.5" y="150.5" width="434" height="342" fill="none" stroke="#000" stroke-width="1"/>
 <g fill="#000"><path d="M107 488h1v1h-1zM106 489h1v1h-1zM108 489h1v1h-1zM105 490h1v1h-1zM109 490h1v1h-1zM105 491h1v1h-1zM109 491h1v1h-1zM105 492h1v1h-1zM109 492h1v1h-1zM105 493h1v1h-1zM109 493h1v1h-1zM105 494h1v1h-1zM109 494h1v1h-1zM106 495h1v1h-1zM108 495h1v1h-1zM107 496h1v1h-1z"/><path d="M106 431h3v1h-3zM105 432h1v1h-1zM109 432h1v1h-1zM105 433h1v1h-1zM109 433h1v1h-1zM109 434h1v1h-1zM108 435h1v1h-1zM107 436h1v1h-1zM106 437h1v1h-1zM105 438h1v1h-1zM105 439h5v1h-5z"/><path d="M108 374h1v1h-1zM108 375h1v1h-1zM107 376h2v1h-2zM106 377h1v1h-1zM108 377h1v1h-1zM106 378h1v1h-1zM108 378h1v1h-1zM105 379h1v1h-1zM108 379h1v1h-1zM105 380h5v1h-5zM108 381h1v1h-1zM108 382h1v1h-1z"/><path d="M106 317h3v1h-3zM105 318h1v1h-1zM109 318h1v1h-1zM105 319h1v1h-1zM105 320h1v1h-1zM105 321h4v1h-4zM105 322h1v1h-1zM109 322h1v1h-1zM105 323h1v1h-1zM109 323h1v1h-1zM105 324h1v1h-1zM109 324h1v1h-1zM106 325h3v1h-3z"/><path d="M106 260h3v1h-3zM105 261h1v1h-1zM109 261h1v1h-1zM105 262h1v1h-1zM109 262h1v1h-1zM105 263h1v1h-1zM109 263h1v1h-1zM106 264h3v1h-3zM105 265h1v1h-1zM109 265h1v1h-1zM105 266h1v1h-1zM109 266h1v1h-1zM105 267h1v1h-1zM109 267h1v1h-1zM106 268h3v1h-3z"/><path d="M101 203h1v1h-1zM100 204h2v1h-2zM99 205h1v1h-1zM101 205h1v1h-1zM101 206h1v1h-1zM101 207h1v1h-1zM101 208h1v1h-1zM101 209h1v1h-1zM101 210h1v1h-1zM99 211h5v1h-5zM107 203h1v1h-1zM106 204h1v1h-1zM108 204h1v1h-1zM105 205h1v1h-1zM109 205h1v1h-1zM105 206h1v1h-1zM109 206h1v1h-1zM105 207h1v1h-1zM109 207h1v1h-1zM105 208h1v1h-1zM109 208h1v1h-1zM105 209h1v1h-1zM109 209h1v1h-1zM106 210h1v1h-1zM108 210h1v1h-1zM107 211h1v1h-1z"/><path d="M101 146h1v1h-1zM100 147h2v1h-2zM99 148h1v1h-1zM101 148h1v1h-1zM101 149h1v1h-1zM101 150h1v1h-1zM101 151h1v1h-1zM101 152h1v1h-1zM101 153h1v1h-1zM99 154h5v1h-5zM106 146h3v1h-3zM105 147h1v1h-1zM109 147h1v1h-1zM105 148h1v1h-1zM109 148h1v1h-1zM109 149h1v1h-1zM108 150h1v1h-1zM107 151h1v1h-1zM106 152h1v1h-1zM105 153h1v1h-1zM105 154h5v1h-5z"/><path d="M114 498h1v1h-1zM113 499h1v1h-1zM115 499h1v1h-1zM112 500h1v1h-1zM116 500h1v1h-1zM112 501h1v1h-1zM116 501h1v1h-1zM112 502h1v1h-1zM116 502h1v1h-1zM112 503h1v1h-1zM116 503h1v1h-1zM112 504h1v1h-1zM116 504h1v1h-1zM113 505h1v1h-1zM115 505h1v1h-1zM114 506h1v1h-1z"/><path d="M192 498h5v1h-5zM192 499h1v1h-1zM192 500h1v1h-1zM192 501h1v1h-1zM194 501h2v1h-2zM192 502h2v1h-2zM196 502h1v1h-1zM196 503h1v1h-1zM196 504h1v1h-1zM192 505h1v1h-1zM196 505h1v1h-1zM193 506h3v1h-3zM200 498h1v1h-1zM199 499h1v1h-1zM201 499h1v1h-1zM198 500h1v1h-1zM202 500h1v1h-1zM198 501h1v1h-1zM202 501h1v1h-1zM198 502h1v1h-1zM202 502h1v1h-1zM198 503h1v1h-1zM202 503h1v1h-1zM198 504h1v1h-1zM202 504h1v1h-1zM199 505h1v1h-1zM201 505h1v1h-1zM200 506h1v1h-1zM206 498h1v1h-1zM205 499h1v1h-1zM207 499h1v1h-1zM204 500h1v1h-1zM208 500h1v1h-1zM204 501h1v1h-1zM208 501h1v1h-1zM204 502h1v1h-1zM208 502h1v1h-1zM204 503h1v1h-1zM208 503h1v1h-1zM204 504h1v1h-1zM208 504h1v1h-1zM205 505h1v1h-1zM207 505h1v1h-1zM206 506h1v1h-1z"/><path d="M278 498h1v1h-1zM277 499h2v1h-2zM276 500h1v1h-1zM278 500h1v1h-1zM278 501h1v1h-1zM278 502h1v1h-1zM278 503h1v1h-1zM278 504h1v1h-1zM278 505h1v1h-1zM276 506h5v1h-5zM284 498h1v1h-1zM283 499h1v1h-1zM285 499h1v1h-1zM282 500h1v1h-1zM286 500h1v1h-1zM282 501h1v1h-1zM286 501h1v1h-1zM282 502h1v1h-1zM286 502h1v1h-1zM282 503h1v1h-1zM286 503h1v1h-1zM282 504h1v1h-1zM286 504h1v1h-1zM283 505h1v1h-1zM285 505h1v1h-1zM284 506h1v1h-1zM290 498h1v1h-1zM289 499h1v1h-1zM291 499h1v1h-1zM288 500h1v1h-1zM292 500h1v1h-1zM288 501h1v1h-1zM292 501h1v1h-1zM288 502h1v1h-1zM292 502h1v1h-1zM288 503h1v1h-1zM292 503h1v1h-1zM288 504h1v1h-1zM292 504h1v1h-1zM289 505h1v1h-1zM291 505h1v1h-1zM290 506h1v1h-1zM296 498h1v1h-1zM295 499h1v1h-1zM297 499h1v1h-1zM294 500h1v1h-1zM298 500h1v1h-1zM294 501h1v1h-1zM298 501h1v1h-1zM294 502h1v1h-1zM298 502h1v1h-1zM294 503h1v1h-1zM298 503h1v1h-1zM294 504h1v1h-1zM298 504h1v1h-1zM295 505h1v1h-1zM297 505h1v1h-1zM296 506h1v1h-1z"/><path d="M365 498h1v1h-1zM364 499h2v1h-2zM363 500h1v1h-1zM365 500h1v1h-1zM365 501h1v1h-1zM365 502h1v1h-1zM365 503h1v1h-1zM365 504h1v1h-1zM365 505h1v1h-1zM363 506h5v1h-5zM369 498h5v1h-5zM369 499h1v1h-1zM369 500h1v1h-1zM369 501h1v1h-1zM371 501h2v1h-2zM369 502h2v1h-2zM373 502h1v1h-1zM373 503h1v1h-1zM373 504h1v1h-1zM369 505h1v1h-1zM373 505h1v1h-1zM370 506h3v1h-3zM377 498h1v1h-1zM376 499h1v1h-1zM378 499h1v1h-1zM375 500h1v1h-1zM379 500h1v1h-1zM375 501h1v1h-1zM379 501h1v1h-1zM375 502h1v1h-1zM379 502h1v1h-1zM375 503h1v1h-1zM379 503h1v1h-1zM375 504h1v1h-1zM379 504h1v1h-1zM376 505h1v1h-1zM378 505h1v1h-1zM377 506h1v1h-1zM383 498h1v1h-1zM382 499h1v1h-1zM384 499h1v1h-1zM381 500h1v1h-1zM385 500h1v1h-1zM381 501h1v1h-1zM385 501h1v1h-1zM381 502h1v1h-1zM385 502h1v1h-1zM381 503h1v1h-1zM385 503h1v1h-1zM381 504h1v1h-1zM385 504h1v1h-1zM382 505h1v1h-1zM384 505h1v1h-1zM383 506h1v1h-1z"/><path d="M451 498h3v1h-3zM450 499h1v1h-1zM454 499h1v1h-1zM450 500h1v1h-1zM454 500h1v1h-1zM454 501h1v1h-1zM453 502h1v1h-1zM452 503h1v1h-1zM451 504h1v1h-1zM450 505h1v1h-1zM450 506h5v1h-5zM458 498h1v1h-1zM457 499h1v1h-1zM459 499h1v1h-1zM456 500h1v1h-1zM460 500h1v1h-1zM456 501h1v1h-1zM460 501h1v1h-1zM456 502h1v1h-1zM460 502h1v1h-1zM456 503h1v1h-1zM460 503h1v1h-1zM456 504h1v1h-1zM460 504h1v1h-1zM457 505h1v1h-1zM459 505h1v1h-1zM458 506h1v1h-1zM464 498h1v1h-1zM463 499h1v1h-1zM465 499h1v1h-1zM462 500h1v1h-1zM466 500h1v1h-1zM462 501h1v1h-1zM466 501h1v1h-1zM462 502h1v1h-1zM466 502h1v1h-1zM462 503h1v1h-1zM466 503h1v1h-1zM462 504h1v1h-1zM466 504h1v1h-1zM463 505h1v1h-1zM465 505h1v1h-1zM464 506h1v1h-1zM470 498h1v1h-1zM469 499h1v1h-1zM471 499h1v1h-1zM468 500h1v1h-1zM472 500h1v1h-1zM468 501h1v1h-1zM472 501h1v1h-1zM468 502h1v1h-1zM472 502h1v1h-1zM468 503h1v1h-1zM472 503h1v1h-1zM468 504h1v1h-1zM472 504h1v1h-1zM469 505h1v1h-1zM471 505h1v1h-1zM470 506h1v1h-1z"/><path d="M538 498h3v1h-3zM537 499h1v1h-1zM541 499h1v1h-1zM537 500h1v1h-1zM541 500h1v1h-1zM541 501h1v1h-1zM540 502h1v1h-1zM539 503h1v1h-1zM538 504h1v1h-1zM537 505h1v1h-1zM537 506h5v1h-5zM543 498h5v1h-5zM543 499h1v1h-1zM543 500h1v1h-1zM543 501h1v1h-1zM545 501h2v1h-2zM543 502h2v1h-2zM547 502h1v1h-1zM547 503h1v1h-1zM547 504h1v1h-1zM543 505h1v1h-1zM547 505h1v1h-1zM544 506h3v1h-3zM551 498h1v1h-1zM550 499h1v1h-1zM552 499h1v1h-1zM549 500h1v1h-1zM553 500h1v1h-1zM549 501h1v1h-1zM553 501h1v1h-1zM549 502h1v1h-1zM553 502h1v1h-1zM549 503h1v1h-1zM553 503h1v1h-1zM549 504h1v1h-1zM553 504h1v1h-1zM550 505h1v1h-1zM552 505h1v1h-1zM551 506h1v1h-1zM557 498h1v1h-1zM556 499h1v1h-1zM558 499h1v1h-1zM555 500h1v1h-1zM559 500h1v1h-1zM555 501h1v1h-1zM559 501h1v1h-1zM555 502h1v1h-1zM559 502h1v1h-1zM555 503h1v1h-1zM559 503h1v1h-1zM555 504h1v1h-1zM559 504h1v1h-1zM556 505h1v1h-1zM558 505h1v1h-1zM557 506h1v1h-1z"/></g>
</svg>
</body></html>
